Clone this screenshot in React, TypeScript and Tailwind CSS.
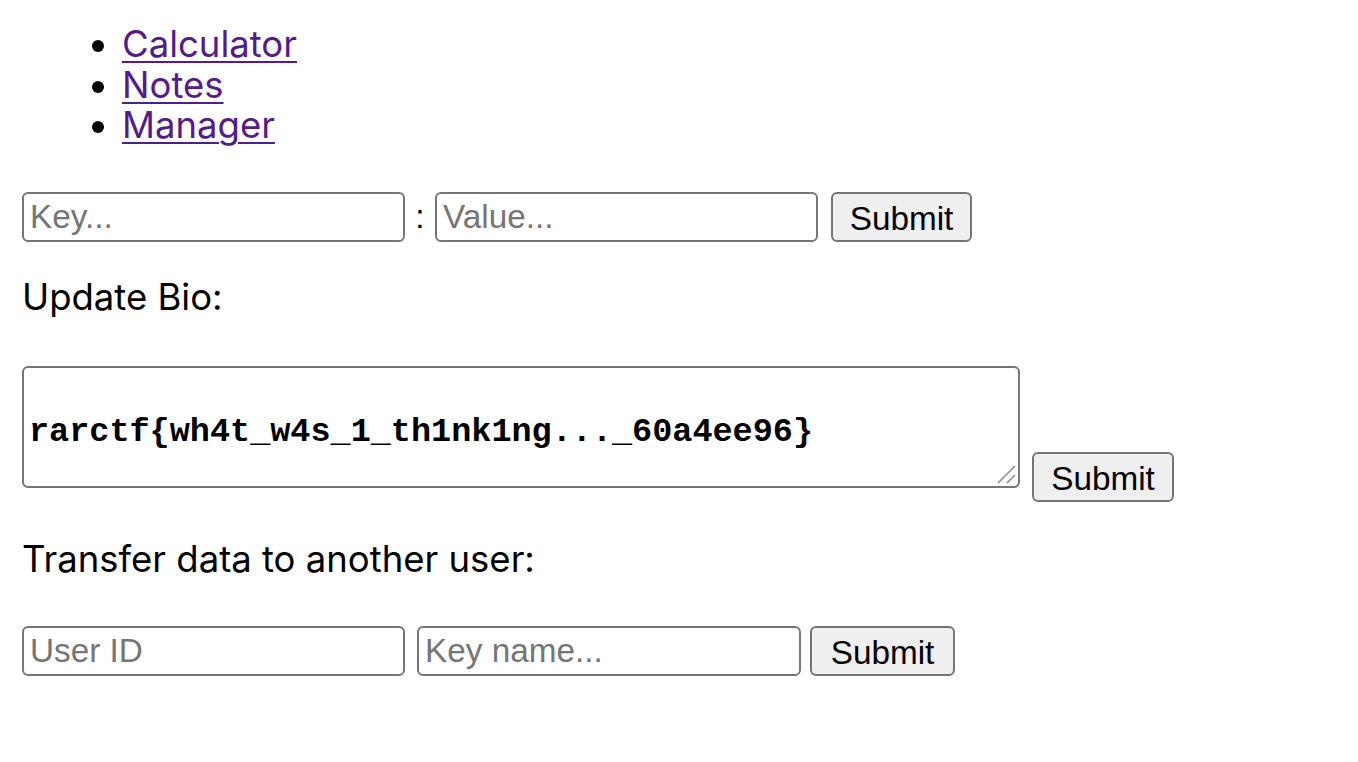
export default function App() {
  const links = ['Calculator', 'Notes', 'Manager'];
  const inputCls =
    'h-[50px] rounded-[6px] border-[2.5px] border-[#767676] bg-white px-[6px] text-[33.3px] text-black placeholder:text-[#757575] outline-none';
  const buttonCls =
    'h-[50px] rounded-[6px] border-[2.5px] border-[#767676] bg-[#efefef] text-[33.3px] text-black';

  return (
    <div className="min-h-screen bg-white px-[22px] text-black" style={{ fontFamily: 'Inter, "Liberation Sans", sans-serif' }}>
      {/* nav */}
      <ul className="list-disc pl-[100px] pt-[24px] text-[36.5px] leading-[40.5px]">
        {links.map((l) => (
          <li key={l}>
            <a href="#" className="text-[#551a8b] underline underline-offset-[4px] decoration-[2px]">
              {l}
            </a>
          </li>
        ))}
      </ul>

      {/* key / value */}
      <form className="mt-[46.5px] flex items-center" style={{ fontFamily: '"Liberation Sans", Arial, sans-serif' }}>
        <input className={`${inputCls} w-[383px]`} placeholder="Key..." />
        <span className="w-[30px] text-center text-[33.3px]">:</span>
        <input className={`${inputCls} w-[383px]`} placeholder="Value..." />
        <button type="button" className={`${buttonCls} ml-[13px] w-[141px]`}>
          Submit
        </button>
      </form>

      <p className="mt-[35px] text-[36.5px] leading-[40px]">Update Bio:</p>

      <div className="mt-[49px] flex items-end" style={{ fontFamily: '"Liberation Sans", Arial, sans-serif' }}>
        <div className="relative mb-[14px]">
          <textarea
            className="block h-[122px] w-[998px] resize-none rounded-[6px] border-[2.5px] border-[#767676] bg-white px-[5px] py-[7px] text-[33.5px] font-bold leading-[38px] text-black outline-none"
            style={{ fontFamily: '"Liberation Mono", "Courier New", monospace' }}
            defaultValue={'\nrarctf{wh4t_w4s_1_th1nk1ng..._60a4ee96}'}
          />
          {/* resize grip */}
          <svg className="pointer-events-none absolute bottom-[4px] right-[4px] h-[20px] w-[20px]" viewBox="0 0 20 20">
            <line x1="2" y1="19" x2="19" y2="2" stroke="#8a8a8a" strokeWidth="1.6" />
            <line x1="11" y1="19" x2="19" y2="11" stroke="#8a8a8a" strokeWidth="1.6" />
          </svg>
        </div>
        <button type="button" className={`${buttonCls} ml-[12px] w-[142px]`}>
          Submit
        </button>
      </div>

      <p className="mt-[37px] text-[36.5px] leading-[40px]">Transfer data to another user:</p>

      {/* transfer */}
      <form className="mt-[47px] flex items-center" style={{ fontFamily: '"Liberation Sans", Arial, sans-serif' }}>
        <input className={`${inputCls} w-[383px]`} placeholder="User ID" />
        <input className={`${inputCls} ml-[12px] w-[384px]`} placeholder="Key name..." />
        <button type="button" className={`${buttonCls} ml-[9px] w-[145px]`}>
          Submit
        </button>
      </form>
    </div>
  );
}
